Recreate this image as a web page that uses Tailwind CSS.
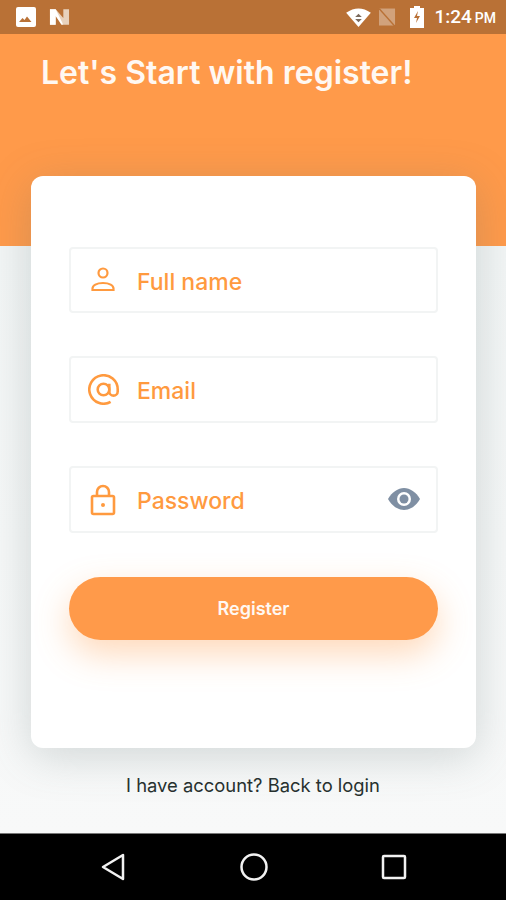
<!DOCTYPE html>
<html lang="en">
<head>
    <meta charset="UTF-8">
    <meta name="viewport" content="width=device-width, initial-scale=1.0">
    <title>Register</title>
    <script src="https://cdn.jsdelivr.net/npm/@tailwindcss/browser@4"></script>
</head>
<body class="bg-[#f6f8f8] font-['Inter','Liberation_Sans',sans-serif]">
    <div class="w-[506px] h-[900px] flex flex-col overflow-hidden">
        <!-- status bar -->
        <div class="h-[34px] shrink-0 bg-[#b97136] flex items-center pl-[16px] pr-[10px] text-white">
            <svg class="w-[20px] h-[20px]" viewBox="0 0 20 20"><rect x="0" y="0" width="20" height="20" rx="2" fill="#fff"/><path d="M3 15l3.500-4 2 2 2.500-3.500 4.500 5.500z" fill="#b97136"/></svg>
            <svg class="w-[21px] h-[18px] ml-[13px]" viewBox="0 0 22 18"><path d="M1 1h6l8 9V1h6v16h-6L7 8v9H1z" fill="#e8d2bd"/><path d="M1 1h6l8 16h-2L7 8v9H1z" fill="#fff"/></svg>
            <svg class="w-[25px] h-[19px] ml-auto" viewBox="0 0 26 20"><path d="M0 5Q13-4 26 5L13 20z" fill="#fff"/><path d="M13 6l3.500 3.500h-7zM13 15l-3.500-3.500h7z" fill="#7b6a5c"/></svg>
            <svg class="w-[17px] h-[19px] ml-[8px]" viewBox="0 0 18 19"><path d="M0 0h17v18H0z" fill="#fff" opacity=".35"/><path d="M0 0l17 19" stroke="#b97136" stroke-width="1.500"/></svg>
            <svg class="w-[14px] h-[22px] ml-[14px]" viewBox="0 0 14 22"><path d="M4 0h6v2h4v20H0V2h4z" fill="#fff"/><path d="M8 5L4 12h3l-1 5 4-7H7z" fill="#b97136"/></svg>
            <span class="ml-[10px] text-[19px] font-medium font-['Roboto',sans-serif]">1:24</span>
            <span class="ml-[3px] mt-[3px] text-[14px] font-medium font-['Roboto',sans-serif]">PM</span>
        </div>

        <!-- header -->
        <div class="h-[212px] shrink-0 bg-[#ff9a4a] pl-[41px] pt-[20px]">
            <h1 class="text-[32px] leading-[38px] font-semibold text-[#fff8f2]">Let's Start with register!</h1>
        </div>

        <!-- form card -->
        <div class="relative flex-1 bg-gradient-to-b from-[#f2f5f5] to-[#f8f9f9]">
            <div class="ml-[31px] mr-[30px] mt-[-70px] h-[572px] bg-white rounded-[12px] shadow-[0_8px_44px_rgba(90,110,110,0.25)] pl-[38px] pr-[38px] pt-[71px] flex flex-col relative">
                <div class="h-[66px] border-2 border-[#f2f4f4] rounded-[4px] flex items-center pl-[19px] text-[#ff9a3f]">
                    <svg class="w-[28px] h-[28px] -ml-[1px]" viewBox="0 0 28 28" fill="none" stroke="currentColor" stroke-width="2.200"><circle cx="14" cy="7" r="4.500"/><path d="M3.500 24v-1.500c0-3 4-5.500 10.500-5.500s10.500 2.500 10.500 5.500V24z"/></svg>
                    <span class="ml-[20px] mt-[4px] text-[23px] font-medium">Full name</span>
                </div>
                <div class="h-[67px] mt-[43px] border-2 border-[#f2f4f4] rounded-[4px] flex items-center pl-[17px] text-[#ff9a3f]">
                    <svg class="w-[31px] h-[31px]" viewBox="0 0 24 24" fill="none" stroke="currentColor" stroke-width="2"><circle cx="12" cy="12" r="4.500"/><path d="M16.500 7.500V13.500a3.200 3.200 0 0 0 6.500 0V12A11 11 0 1 0 17.500 21.500"/></svg>
                    <span class="ml-[18px] mt-[3px] text-[23px] font-medium">Email</span>
                </div>
                <div class="h-[67px] mt-[43px] border-2 border-[#f2f4f4] rounded-[4px] flex items-center pl-[19px] pr-[16px] text-[#ff9a3f]">
                    <svg class="w-[28px] h-[32px] -ml-[1px]" viewBox="0 0 28 32" fill="none" stroke="currentColor" stroke-width="2.600"><rect x="3" y="12" width="22" height="18" rx="1.500"/><path d="M8 12V8a6 6 0 0 1 12 0v4"/><circle cx="14" cy="21" r="2" fill="currentColor" stroke="none"/></svg>
                    <span class="ml-[20px] mt-[3px] text-[23px] font-medium">Password</span>
                    <svg class="w-[32px] h-[22px] ml-auto -mt-[2px]" viewBox="0 0 32 22"><path d="M0 11C4 4 10 0 16 0s12 4 16 11c-4 7-10 11-16 11S4 18 0 11z" fill="#7f8fa3"/><circle cx="16" cy="11" r="7" fill="#fff"/><circle cx="16" cy="11" r="4.500" fill="#7f8fa3"/></svg>
                </div>
                <button class="h-[63px] mt-[44px] rounded-full bg-[#ff9a4a] text-[#fff8f2] text-[18px] font-semibold shadow-[0_14px_34px_rgba(255,154,74,0.38)]">Register</button>
            </div>
            <p class="mt-[25px] text-center text-[18.400px] leading-[24px] text-[#26302e]">I have account? Back to login</p>
        </div>

        <!-- nav bar -->
        <div class="h-[67px] shrink-0 bg-black border-t border-[#777] flex items-center pl-[100px] pr-[99px] justify-between">
            <svg class="w-[26px] h-[28px]" viewBox="0 0 26 28" fill="none" stroke="#f2f2f2" stroke-width="2.500" stroke-linejoin="round"><path d="M23 2v24L3 14z"/></svg>
            <svg class="w-[28px] h-[28px]" viewBox="0 0 28 28" fill="none" stroke="#f2f2f2" stroke-width="2.500"><circle cx="14" cy="14" r="12.500"/></svg>
            <svg class="w-[26px] h-[26px]" viewBox="0 0 26 26" fill="none" stroke="#f2f2f2" stroke-width="2.500" stroke-linejoin="round"><rect x="2" y="2" width="22" height="22" rx="1"/></svg>
        </div>
    </div>
</body>
</html>
